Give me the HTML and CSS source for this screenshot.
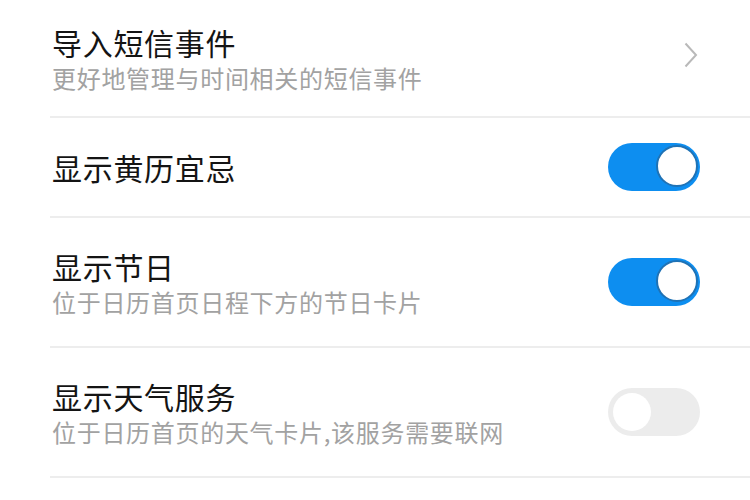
FILE: index.html
```html
<!DOCTYPE html>
<html lang="zh-CN">
<head>
    <meta charset="UTF-8">
    <meta name="viewport" content="width=device-width, initial-scale=1.0">
    <title>日历设置</title>
    <link rel="stylesheet" href="styles.css">
</head>
<body>
    <!-- Settings list -->
    <div class="settings-list">
        <div class="setting-row row-first">
            <div class="setting-text">
                <div class="setting-title">导入短信事件</div>
                <div class="setting-desc">更好地管理与时间相关的短信事件</div>
            </div>
            <svg class="chevron" width="14" height="26" viewBox="0 0 14 26">
                <path d="M1.5 1.5 L12 13 L1.5 24.5" fill="none" stroke="#b9b9b9" stroke-width="2"/>
            </svg>
        </div>
        <div class="setting-row row-single">
            <div class="setting-text">
                <div class="setting-title">显示黄历宜忌</div>
            </div>
            <div class="switch switch-on"><span class="knob"></span></div>
        </div>
        <div class="setting-row">
            <div class="setting-text">
                <div class="setting-title">显示节日</div>
                <div class="setting-desc">位于日历首页日程下方的节日卡片</div>
            </div>
            <div class="switch switch-on"><span class="knob"></span></div>
        </div>
        <div class="setting-row">
            <div class="setting-text">
                <div class="setting-title">显示天气服务</div>
                <div class="setting-desc">位于日历首页的天气卡片,该服务需要联网</div>
            </div>
            <div class="switch"><span class="knob"></span></div>
        </div>
    </div>
</body>
</html>
```

FILE: styles.css
```css
/* Global */
html, body {
    margin: 0;
    padding: 0;
    background-color: #ffffff;
    font-family: "Noto Sans CJK SC", "Noto Sans", sans-serif;
}
/* List */
.settings-list {
    margin-left: 50px;
}
.setting-row {
    display: flex;
    align-items: center;
    justify-content: space-between;
    height: 128px;
    padding: 0 50px 0 2px;
    border-bottom: 2px solid #ededed;
}
.row-first {
    height: 116px;
}
.row-single {
    height: 98px;
}
.setting-title {
    font-size: 30px;
    line-height: 36px;
    color: #141414;
    letter-spacing: 0.7px;
}
.setting-desc {
    margin-top: 3px;
    font-size: 24px;
    line-height: 30px;
    color: #a2a2a2;
    letter-spacing: 0.7px;
}
/* Chevron */
.chevron {
    margin: 0 2px 6px 0;
}
/* Switch */
.switch {
    position: relative;
    width: 92px;
    height: 48px;
    border-radius: 24px;
    background-color: #ececec;
    flex-shrink: 0;
}
.switch .knob {
    position: absolute;
    top: 5px;
    left: 5px;
    width: 38px;
    height: 38px;
    border-radius: 50%;
    background-color: #ffffff;
}
.switch-on {
    background-color: #0d8ef0;
}
.switch-on .knob {
    top: 2px;
    left: auto;
    right: 2px;
    border: 2px solid #1f72b5;
}
```
